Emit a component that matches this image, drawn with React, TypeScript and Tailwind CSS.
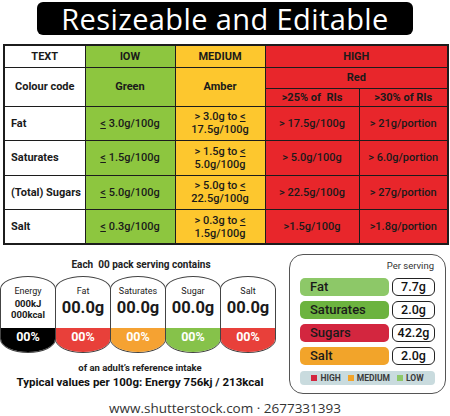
import React from 'react';

const cond = { fontFamily: 'Roboto, "Liberation Sans", sans-serif' };

const Le = ({ children }: { children: React.ReactNode }) => (
  <span className="underline underline-offset-[1px]">{children}</span>
);

const rows = [
  { name: 'Fat', low: '3.0g/100g', med: ['> 3.0g to ', '17.5g/100g'], h1: '> 17.5g/100g', h2: '> 21g/portion' },
  { name: 'Saturates', low: ' 1.5g/100g', med: ['> 1.5g to ', '5.0g/100g'], h1: '> 5.0g/100g', h2: '> 6.0g/portion' },
  { name: '(Total) Sugars', low: '5.0g/100g', med: ['> 5.0g to ', '22.5g/100g'], h1: '> 22.5g/100g', h2: '> 27g/portion' },
  { name: 'Salt', low: '0.3g/100g', med: ['> 0.3g to ', '1.5g/100g'], h1: '>1.5g/100g', h2: '>1.8g/portion' },
];

const labels = [
  { title: 'Energy', color: 'bg-black', energy: true },
  { title: 'Fat', color: 'bg-[#e8403a]' },
  { title: 'Saturates', color: 'bg-[#f5a232]' },
  { title: 'Sugar', color: 'bg-[#86c24a]' },
  { title: 'Salt', color: 'bg-[#e8403a]' },
];

const panel = [
  { name: 'Fat', value: '7.7g', bar: 'bg-[#8dc868]' },
  { name: 'Saturates', value: '2.0g', bar: 'bg-[#6cb33f]' },
  { name: 'Sugars', value: '42.2g', bar: 'bg-[#d3263f]' },
  { name: 'Salt', value: '2.0g', bar: 'bg-[#f2a42a]' },
];

const App: React.FC = () => {
  const td = 'border-[1.5px] border-[#1c1c1c] text-center text-[11px] font-bold text-[#1a1a1a] leading-[13px]';
  return (
    <div className="w-[450px] h-[416px] bg-white overflow-hidden relative" style={cond}>
      <div className="flex justify-center pt-[2px]">
        <div
          className="h-[33px] w-[376px] text-center bg-black rounded-[6px] text-white text-[29px] leading-[33px] font-medium tracking-[0.4px]"
          style={{ fontFamily: '"Open Sans", sans-serif' }}
        >
          Resizeable and Editable
        </div>
      </div>

      <table className="ml-[3px] mt-[9px] border-collapse border-2 border-[#1c1c1c] table-fixed w-[444px]">
        <colgroup>
          <col className="w-[81px]" />
          <col className="w-[90px]" />
          <col className="w-[90px]" />
          <col className="w-[94px]" />
          <col className="w-[89px]" />
        </colgroup>
        <tbody>
          <tr className="h-[22px]">
            <td className={`${td} bg-white text-[11.5px]`}>TEXT</td>
            <td className={`${td} bg-[#8dc63f] text-[11.5px]`}>lOW</td>
            <td className={`${td} bg-[#fdc72e] text-[11.5px]`}>MEDIUM</td>
            <td colSpan={2} className={`${td} bg-[#e8262b] text-[11.5px]`}>HIGH</td>
          </tr>
          <tr className="h-[21px]">
            <td rowSpan={2} className={`${td} bg-white`}>Colour code</td>
            <td rowSpan={2} className={`${td} bg-[#8dc63f]`}>Green</td>
            <td rowSpan={2} className={`${td} bg-[#fdc72e]`}>Amber</td>
            <td colSpan={2} className={`${td} bg-[#e8262b]`}>Red</td>
          </tr>
          <tr className="h-[18px]">
            <td className={`${td} bg-[#e8262b]`}>&gt;25% of&nbsp; RIs</td>
            <td className={`${td} bg-[#e8262b]`}>&gt;30% of RIs</td>
          </tr>
          {rows.map((r) => (
            <tr key={r.name} className="h-[34.5px]">
              <td className={`${td} bg-white text-left pl-[6px]`}>{r.name}</td>
              <td className={`${td} bg-[#8dc63f] font-medium`}>
                <Le>&lt;</Le> {r.low}
              </td>
              <td className={`${td} bg-[#fdc72e] font-medium`}>
                {r.med[0]}
                <Le>&lt;</Le>
                <br />
                {r.med[1]}
              </td>
              <td className={`${td} bg-[#e8262b] font-medium`}>{r.h1}</td>
              <td className={`${td} bg-[#e8262b] font-medium`}>{r.h2}</td>
            </tr>
          ))}
        </tbody>
      </table>

      <div className="flex mt-[9px]">
        <div className="w-[280px] flex flex-col items-center" style={{ fontFamily: 'Roboto, sans-serif' }}>
          <div className="text-[10px] font-bold text-[#222] mt-[5px] leading-[12px] pl-[2px]">
            Each&nbsp; 00 pack serving contains
          </div>
          <div className="flex mt-[5px] self-start">
            {labels.map((l, i) => (
              <div
                key={l.title}
                className={`w-[56px] h-[77px] flex flex-col border border-[#444] rounded-t-[28px_13px] rounded-b-[28px_14px] overflow-hidden ${i > 0 ? '-ml-px' : ''}`}
              >
                <div className="flex-1 flex flex-col items-center pt-[9px] text-[#1a1a1a]">
                  <div className="text-[9px] leading-[11px]">{l.title}</div>
                  {l.energy ? (
                    <div className="text-[9.5px] font-bold leading-[11px] mt-[1px] text-center">
                      000kJ
                      <br />
                      000kcal
                    </div>
                  ) : (
                    <div className="text-[16.5px] font-bold leading-[18px] mt-[2px]">00.0g</div>
                  )}
                </div>
                <div className={`${l.color} h-[24px] flex items-start justify-center pt-[2px] text-white text-[12.5px] font-bold leading-[14px]`}>
                  00%
                </div>
              </div>
            ))}
          </div>
          <div className="text-[9.5px] font-bold text-[#222] mt-[9px] leading-[12px]">of an adult’s reference intake</div>
          <div className="text-[11.5px] font-bold text-[#111] leading-[15px] mt-[1px]">
            Typical values per 100g: Energy 756kj / 213kcal
          </div>
        </div>

        <div className="ml-[9px] w-[157px] h-[140px] border-[1.5px] border-[#555] rounded-[14px] px-[10px] pt-[5px]">
          <div className="text-right text-[9.5px] text-[#333] leading-[12px] pr-[1px]">Per serving</div>
          <div className="flex flex-col gap-[5px] mt-[6px]">
            {panel.map((p) => (
              <div key={p.name} className="flex gap-[3px] h-[18px]">
                <div className={`${p.bar} flex-1 rounded-[5px] pl-[10px] text-[13px] font-medium leading-[18px] text-[#1a1a1a]`}>
                  {p.name}
                </div>
                <div className="w-[43px] border-[1.5px] border-[#222] rounded-[6px] text-center text-[12.5px] font-medium leading-[15px] text-[#111]">
                  {p.value}
                </div>
              </div>
            ))}
          </div>
          <div className="mt-[6px] h-[14px] bg-[#c9dbde] rounded-[4px] flex items-center justify-center gap-[7px] text-[8.5px] font-bold text-[#3a3a3a]">
            <span className="flex items-center gap-[3px]"><span className="w-[6px] h-[6px] bg-[#d3263f]" />HIGH</span>
            <span className="flex items-center gap-[3px]"><span className="w-[6px] h-[6px] bg-[#f2a42a]" />MEDIUM</span>
            <span className="flex items-center gap-[3px]"><span className="w-[6px] h-[6px] bg-[#8dc868]" />LOW</span>
          </div>
        </div>
      </div>

      <div
        className="absolute left-0 right-0 top-[398px] text-center text-[13.5px] text-[#333]"
        style={{ fontFamily: '"Open Sans", sans-serif' }}
      >
        www.shutterstock.com · 2677331393
      </div>
    </div>
  );
};

export default App;
